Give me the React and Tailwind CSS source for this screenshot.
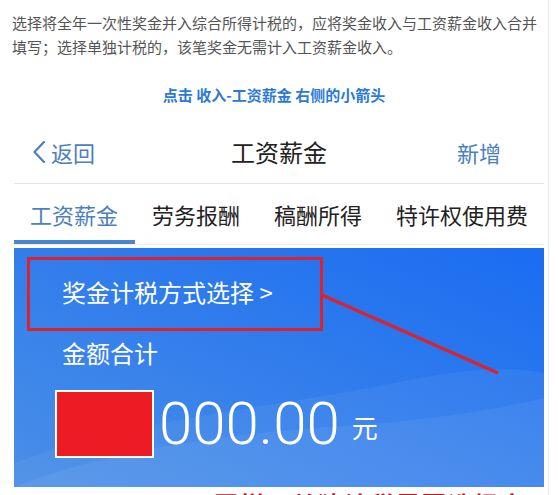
import React from 'react';

const tabs = ['工资薪金', '劳务报酬', '稿酬所得', '特许权使用费'];

const PanelWaves = () => (
  <svg className="absolute inset-0 h-full w-full" viewBox="0 0 530 239" preserveAspectRatio="none">
    <defs>
      <linearGradient id="panelBg" x1="1" y1="0" x2="0" y2="1">
        <stop offset="0" stopColor="#1a6cf2" />
        <stop offset="1" stopColor="#4a8fe6" />
      </linearGradient>
    </defs>
    <rect width="530" height="239" fill="url(#panelBg)" />
    <path d="M0 215 C120 170 260 160 380 135 C450 120 500 118 530 125 L530 239 L0 239 Z" fill="#ffffff" opacity="0.05" />
    <path d="M0 239 C100 200 220 185 330 178 C420 172 490 160 530 150 L530 239 Z" fill="#ffffff" opacity="0.06" />
  </svg>
);

export default function App() {
  return (
    <div className="relative h-[495px] w-[558px] overflow-hidden bg-white font-['Noto_Sans_CJK_SC','Noto_Sans',sans-serif]">
      <div className="h-full w-[549px] border-r border-[#ececec]">
        <p className="pl-3 pr-[4px] pt-[11px] text-[15px] leading-[24px] text-[#555]">
          选择将全年一次性奖金并入综合所得计税的，应将奖金收入与工资薪金收入合并填写；选择单独计税的，该笔奖金无需计入工资薪金收入。
        </p>
        <p className="mt-[24px] text-center text-[15px] font-bold leading-[24px] text-[#2b7ad8]">
          点击 收入-工资薪金 右侧的小箭头
        </p>

        <div className="ml-[14px] mt-[13px] w-[530px]">
          {/* nav bar */}
          <div className="relative flex h-[64px] items-center border-b border-[#e4e4e4]">
            <div className="flex items-center pl-[18px] text-[#4a7fc1]">
              <svg width="14" height="24" viewBox="0 0 14 24" className="mr-[5px]">
                <path d="M12 2 L2.5 12 L12 22" fill="none" stroke="#4a7fc1" strokeWidth="2.2" strokeLinecap="round" strokeLinejoin="round" />
              </svg>
              <span className="text-[22px] leading-none">返回</span>
            </div>
            <div className="absolute left-1/2 -translate-x-1/2 text-[24px] leading-none text-[#222]">工资薪金</div>
            <span className="ml-auto pr-[43px] text-[22px] leading-none text-[#4a7fc1]">新增</span>
          </div>

          {/* tabs */}
          <div className="flex gap-[34px] pl-[16px] pt-[18px] pb-[14px]">
            {tabs.map((t, i) => (
              <span
                key={t}
                className={`text-[22px] leading-[24px] ${i === 0 ? 'text-[#4a7fc1]' : 'text-[#222]'}`}
              >
                {t}
              </span>
            ))}
          </div>
          <div className="flex items-end border-b border-[#eeeeee]">
            <div className="h-[4px] w-[121px] bg-[#4a86d0]" />
          </div>

          {/* amount panel */}
          <div className="relative mt-[3px] h-[239px] overflow-hidden">
            <PanelWaves />
            <div className="relative flex flex-col pl-[48px] pt-[30px] text-white">
              <span className="text-[24px] leading-[28px]">奖金计税方式选择 &gt;</span>
              <span className="mt-[33px] text-[24px] leading-[28px]">金额合计</span>
              <div className="mt-[23px] flex items-center">
                <div className="-ml-[7px] h-[68px] w-[99px] border-2 border-white bg-[#ed1c24]" />
                <span className="ml-[5px] font-['Roboto',sans-serif] text-[60px] font-light leading-none">000.00</span>
                <span className="ml-[12px] mt-[6px] text-[26px] leading-none">元</span>
              </div>
            </div>

            {/* annotation */}
            <div className="absolute left-[13px] top-[9px] h-[74px] w-[296px] border-[3px] border-[#d9232e]" />
            <svg className="absolute inset-0 h-full w-full" viewBox="0 0 530 239">
              <line x1="308" y1="47" x2="484" y2="125" stroke="#d9232e" strokeWidth="3.5" />
            </svg>
          </div>
        </div>

        <p className="mt-[2px] pl-[214px] text-[24px] font-bold leading-[30px] tracking-[2px] text-[#c8161e]">
          同样，单独计税需要选择方式
        </p>
      </div>
    </div>
  );
}
